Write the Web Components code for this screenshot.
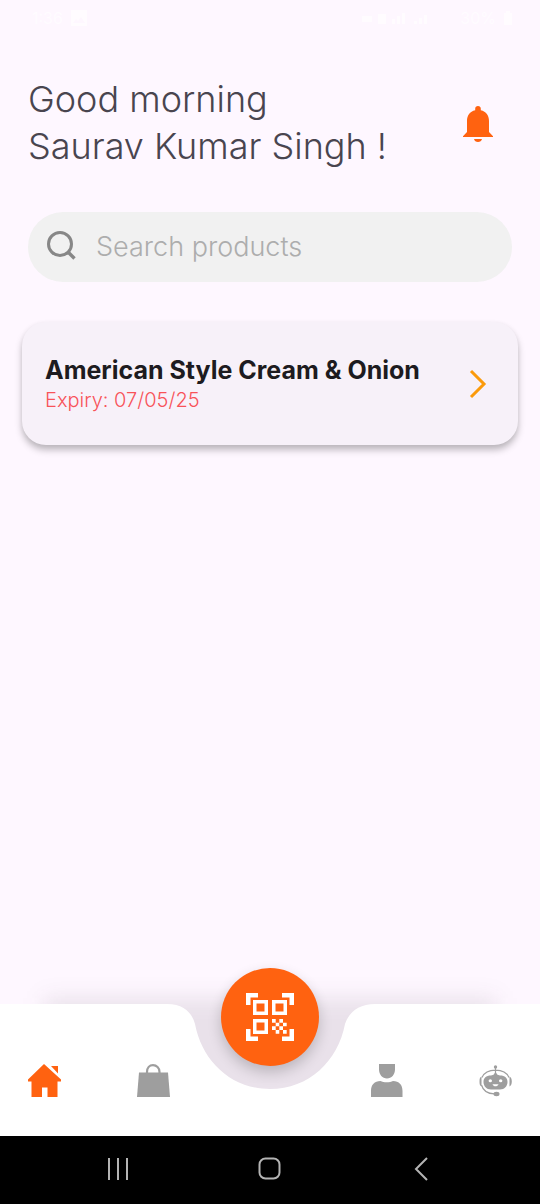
<!DOCTYPE html>
<html lang="en">
<head>
<meta charset="utf-8">
<meta name="viewport" content="width=device-width, initial-scale=1">
<title>Home</title>
<style>
  html, body { margin: 0; }
  body { background: #fef7ff; font-family: Inter, "Open Sans", sans-serif; }
</style>
</head>
<body>
<app-screen>
  <status-bar slot="top"></status-bar>
  <greeting-header>
    <span>Good morning</span>
    <span>Saurav Kumar Singh !</span>
  </greeting-header>
  <search-field placeholder="Search products"></search-field>
  <product-card>
    American Style Cream &amp; Onion
    <span slot="expiry">Expiry: 07/05/25</span>
  </product-card>
  <bottom-nav slot="bottom"></bottom-nav>
  <system-bar slot="bottom"></system-bar>
</app-screen>

<script>
const define = (name, html, setup) => {
  const template = document.createElement('template');
  template.innerHTML = html;
  customElements.define(name, class extends HTMLElement {
    constructor() {
      super();
      this.attachShadow({ mode: 'open' }).append(template.content.cloneNode(true));
    }
    connectedCallback() { if (setup) setup(this, this.shadowRoot); }
  });
};

define('app-screen', `
  <style>
    :host { display: flex; flex-direction: column; min-height: 100vh; }
    main { flex: 1; display: flex; flex-direction: column; }
  </style>
  <slot name="top"></slot>
  <main><slot></slot></main>
  <slot name="bottom"></slot>
`);

define('status-bar', `
  <style>
    :host { display: flex; justify-content: space-between; align-items: center;
            height: 36px; padding: 0 28px 0 32px; color: #fffcff; font-size: 16px; }
    div { display: flex; align-items: center; gap: 8px; }
    svg { display: block; fill: currentColor; }
  </style>
  <div>
    <span>1:36</span>
    <svg width="16" height="16" viewBox="0 0 16 16" aria-hidden="true"><path fill-rule="evenodd" d="M0 0h16v16H0zM2 13h12l-4-6-3 4-2-2z"/></svg>
  </div>
  <div>
    <svg width="90" height="14" viewBox="0 0 90 14" aria-hidden="true"><path d="M0 5h10v6H0zM16 3h8v10h-8zM30 8h3v5h-3zM35 5h3v8h-3zM40 2h3v11h-3zM52 10h3v3h-3zM57 7h3v6h-3zM62 4h3v9h-3z"/></svg>
    <span>30%</span>
    <svg width="8" height="14" viewBox="0 0 8 14" aria-hidden="true"><path d="M2 0h4v2h2v12H0V2h2z"/></svg>
  </div>
`);

define('greeting-header', `
  <style>
    :host { display: flex; justify-content: space-between; align-items: center; padding: 40px 46px 0 28px; }
    h1 { margin: 0; display: flex; flex-direction: column; color: #49454f;
         font-size: 36px; line-height: 47px; font-weight: 300; }
    button { border: 0; padding: 0; background: none; display: block; color: #ff6210; }
    svg { display: block; }
  </style>
  <h1><slot></slot></h1>
  <button type="button" aria-label="Notifications">
    <svg width="32" height="38" viewBox="0 0 32 38" fill="currentColor" aria-hidden="true">
      <path d="M16 2c1.700 0 2.800 1 2.800 2.700v1.600C24.200 7.600 27 11.700 27 17v11l4 4.200V33H1v-.8L5 28V17C5 11.700 7.800 7.600 13.200 6.300V4.700C13.200 3 14.300 2 16 2zM12 35h8c-.4 2-2 3-4 3s-3.600-1-4-3z"/>
    </svg>
  </button>
`);

define('search-field', `
  <style>
    :host { display: block; padding: 42px 28px 0; }
    label { display: flex; align-items: center; gap: 19px; height: 70px; padding: 0 20px 0 18px;
            box-sizing: border-box; border-radius: 35px; background: #f1f1f1; }
    svg { display: block; flex: none; margin-bottom: 3px; }
    input { flex: 1; min-width: 0; border: 0; padding: 0; background: none; outline: 0;
            font: 300 27px/32px Inter, "Open Sans", sans-serif; color: #49454f; }
    input::placeholder { color: #adadad; opacity: 1; }
  </style>
  <label>
    <svg width="31" height="31" viewBox="0 0 31 31" fill="none" stroke="#878787" stroke-width="3" aria-hidden="true">
      <circle cx="14" cy="14" r="11.500"/><path d="M21.500 21.500L28.500 28.500" stroke-width="3.400"/>
    </svg>
    <input type="search" aria-label="Search products">
  </label>
`, (host, root) => {
  root.querySelector('input').placeholder = host.getAttribute('placeholder');
});

define('product-card', `
  <style>
    :host { display: block; padding: 40px 22px 0; }
    a { display: flex; align-items: center; justify-content: space-between; height: 123px;
        box-sizing: border-box; padding: 0 31px 0 23px; border-radius: 24px; background: #f7f1f9;
        box-shadow: 0 5px 7px rgba(0,0,0,.25), 0 1px 5px rgba(0,0,0,.04);
        text-decoration: none; color: #1d1b20; }
    div { display: flex; flex-direction: column; }
    h2 { margin: 0; font-size: 25px; line-height: 32px; font-weight: 700; white-space: nowrap; }
    p { margin: 0; font-size: 20px; line-height: 28px; font-weight: 300; color: #f85359; }
    svg { display: block; }
  </style>
  <a href="#product">
    <div><h2><slot></slot></h2><p><slot name="expiry"></slot></p></div>
    <svg width="18" height="30" viewBox="0 0 18 30" fill="none" stroke="#fb9a0b" stroke-width="3" aria-hidden="true"><path d="M2 2l13 13L2 28"/></svg>
  </a>
`);

define('bottom-nav', `
  <style>
    :host { display: grid; grid-template: 132px / 1fr; position: relative; isolation: isolate; }
    :host::before { content: ""; position: absolute; z-index: -1; inset: -6px 44px 32px;
                    background: rgba(50,44,52,.1); filter: blur(11px); }
    .shape, nav { grid-area: 1 / 1; }
    .shape { display: grid; grid-template-columns: 1fr 240px 1fr; }
    .side { background: #fff; }
    svg { display: block; }
    nav { display: grid; grid-template-columns: 1fr 201px 1fr; padding: 60px 28px 0; }
    .group { display: flex; justify-content: space-between; align-items: flex-start; }
    button { border: 0; padding: 0; background: none; display: block; color: #9e9e9e; }
    .current { color: #ff6210; }
    .scan { position: absolute; left: 50%; top: -36px; transform: translateX(-50%); width: 98px; height: 98px;
            border-radius: 50%; background: #ff6210; color: #fff; display: grid; place-items: center;
            box-shadow: 0 6px 14px rgba(0,0,0,.2); }
  </style>
  <div class="shape" aria-hidden="true">
    <div class="side"></div>
    <svg width="240" height="132" viewBox="0 0 240 132" fill="#fff"><path d="M0 0H17C34 0 42 9 45 20C52 57 81 85 120 85C159 85 188 57 195 20C199 8 209 0 225 0H240V132H0z"/></svg>
    <div class="side"></div>
  </div>
  <nav>
    <div class="group">
      <button type="button" class="current" aria-label="Home" aria-current="page">
        <svg width="33" height="33" viewBox="0 0 33 33" fill="currentColor" aria-hidden="true"><path d="M16 0L33 15.500V17.500h-3.500V33H19.500V23.500h-5.500V33H3.500V17.500H0v-2zM23 2h7v7.500z"/></svg>
      </button>
      <button type="button" aria-label="Products">
        <svg width="33" height="33" viewBox="0 0 33 33" fill="currentColor" aria-hidden="true"><path d="M2 8.500h29l2 24.500H0z"/><path d="M10 10V8c0-4.200 2.500-6.800 6-6.800s6.500 2.600 6.500 6.800v2" fill="none" stroke="currentColor" stroke-width="2.200"/></svg>
      </button>
    </div>
    <span></span>
    <div class="group">
      <button type="button" aria-label="Profile">
        <svg width="33" height="33" viewBox="0 0 33 33" fill="currentColor" aria-hidden="true"><path d="M8 0h16v5.500c0 5-3.500 9-8 9s-8-4-8-9zM0 33v-6c0-6.500 3.500-9.800 9.500-10 3 1.800 9.500 1.800 12.500 0 6 .2 9.500 3.500 9.500 10v6z"/></svg>
      </button>
      <button type="button" aria-label="Assistant">
        <svg width="33" height="33" viewBox="0 0 33 33" fill="currentColor" aria-hidden="true">
          <g fill="none" stroke="currentColor" stroke-width="1.200"><path d="M16.500 3v8M3 13.500C5 9 10 6.200 16.500 6.200S28 9 30 13.500M2.500 21c1.500 5.500 6 8.800 13 8.800"/></g>
          <circle cx="16.500" cy="3" r="1.700"/><path d="M2.500 12.500v10C.8 22 .5 20 .5 17.500s.3-4.500 2-5zM30.500 12.500c1.500.5 2.300 2.500 2.300 5s-.8 4.500-2.300 5z"/>
          <ellipse cx="17.500" cy="30" rx="3" ry="2.200"/>
          <path fill-rule="evenodd" d="M12 11.500l2.500-.8L16.500 8l2 2.700 2.500.8c5 0 7.500 2.500 7.500 6.500s-3 7.500-7.500 7.500h-9c-4.500 0-7.500-3.500-7.500-7.500s2.500-6.500 7.500-6.500zM9.600 16.800a1.700 1.500 0 1 0 3.400 0a1.700 1.500 0 1 0-3.400 0M20 16.800a1.700 1.500 0 1 0 3.400 0a1.700 1.500 0 1 0-3.400 0M13.500 20.200c1 2.800 5 2.800 6 0z"/>
        </svg>
      </button>
    </div>
  </nav>
  <button type="button" class="scan" aria-label="Scan code">
    <svg width="48" height="48" viewBox="0 0 48 48" fill="currentColor" aria-hidden="true">
      <path d="M0 0h12v4.500H4.500V12H0zM36 0h12v12h-4.500V4.500H36zM0 36h4.500v7.500H12V48H0zM43.500 36H48v12H36v-4.500h7.500z"/>
      <path fill-rule="evenodd" d="M7 7h15v15H7zM10.500 10.500v8h8v-8zM26 7h15v15H26zM29.500 10.500v8h8v-8zM7 26h15v15H7zM10.500 29.500v8h8v-8z"/>
      <path d="M26 26h3.700v3.700H26zM33.300 26H37v3.700h-3.700zM29.700 29.700h3.600v3.600h-3.600zM37 29.700h3.700v3.600H37zM26 33.300h3.700V37H26zM33.300 33.300H37V37h-3.700zM29.700 37h3.600v3.700h-3.600zM37 37h3.700v3.700H37z"/>
    </svg>
  </button>
`);

define('system-bar', `
  <style>
    :host { display: grid; grid-template-columns: 1fr 1fr 1fr; align-items: center; justify-items: center;
            height: 68px; box-sizing: border-box; padding: 0 42px 2px; background: #000; }
    button { border: 0; padding: 0; background: none; display: block; }
    svg { display: block; fill: none; stroke: #b4b4b4; stroke-width: 2; }
  </style>
  <button type="button" aria-label="Recent apps"><svg width="24" height="24" viewBox="0 0 24 24"><path d="M3 1v22M12 1v22M21 1v22"/></svg></button>
  <button type="button" aria-label="System home"><svg width="24" height="24" viewBox="0 0 24 24"><rect x="1.500" y="1.500" width="20" height="20" rx="6"/></svg></button>
  <button type="button" aria-label="Back"><svg width="24" height="24" viewBox="0 0 24 24"><path d="M17 1L6 12l11 11"/></svg></button>
`);
</script>
</body>
</html>
